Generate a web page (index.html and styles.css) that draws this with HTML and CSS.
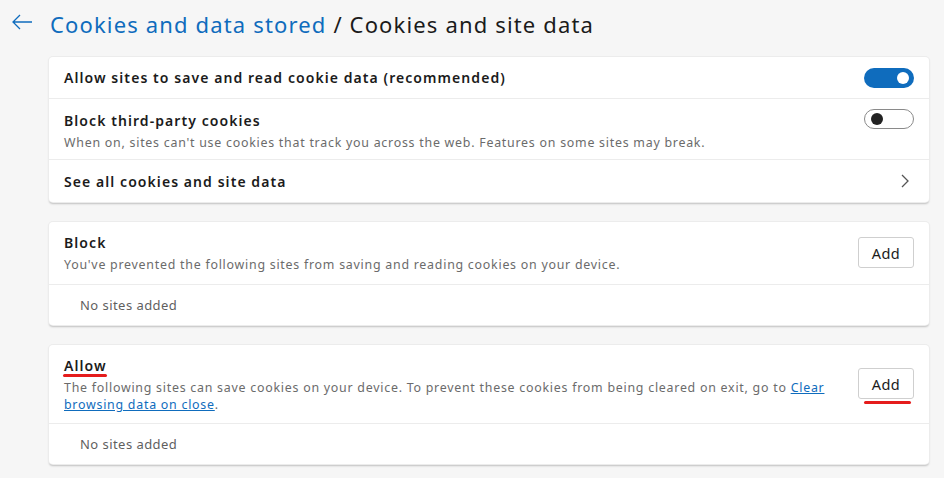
FILE: index.html
```html
<!DOCTYPE html>
<html>
<head>
<meta charset="utf-8">
<link rel="stylesheet" href="styles.css">
</head>
<body>
<div class="page">
  <header class="header">
    <svg class="back" width="22" height="16" viewBox="0 0 22 16"><path d="M21 8H2M9 1L2 8l7 7" fill="none" stroke="#0f6cbd" stroke-width="1.3"/></svg>
    <h1 class="title"><span class="crumb">Cookies and data stored</span> / Cookies and site data</h1>
  </header>

  <section class="card">
    <div class="row row-a">
      <div class="label">Allow sites to save and read cookie data (recommended)</div>
      <span class="toggle on"><span class="knob"></span></span>
    </div>
    <div class="row row-b">
      <div class="text">
        <div class="label">Block third-party cookies</div>
        <div class="desc">When on, sites can't use cookies that track you across the web. Features on some sites may break.</div>
      </div>
      <span class="toggle off"><span class="knob"></span></span>
    </div>
    <div class="row row-c">
      <div class="label">See all cookies and site data</div>
      <svg class="chev" width="10" height="16" viewBox="0 0 10 16"><path d="M2 2l6 6-6 6" fill="none" stroke="#555" stroke-width="1.3"/></svg>
    </div>
  </section>

  <section class="card">
    <div class="row sect-head">
      <div class="text">
        <div class="label">Block</div>
        <div class="desc">You've prevented the following sites from saving and reading cookies on your device.</div>
      </div>
      <button class="add">Add</button>
    </div>
    <div class="row empty">No sites added</div>
  </section>

  <section class="card">
    <div class="row sect-head allow-head">
      <div class="text">
        <div class="label"><span class="mark">Allow</span></div>
        <div class="desc">The following sites can save cookies on your device. To prevent these cookies from being cleared on exit, go to <a class="link" href="#">Clear browsing data on close</a>.</div>
      </div>
      <button class="add marked">Add</button>
    </div>
    <div class="row empty">No sites added</div>
  </section>
</div>
</body>
</html>
```
FILE: styles.css
```css
html, body {
  margin: 0;
  padding: 0;
}
body {
  background: #f6f6f6;
  font-family: "Noto Sans", "Open Sans", sans-serif;
  color: #1b1b1b;
  width: 944px;
  height: 478px;
  overflow: hidden;
}
.page {
  padding: 0 15px 0 49px;
}
.header {
  display: flex;
  align-items: center;
  height: 50px;
  margin-left: -38px;
  margin-bottom: 7px;
}
.back {
  margin-right: 17px;
  margin-top: -6px;
}
.title {
  margin: 0;
  margin-top: -2px;
  font-size: 22px;
  font-weight: 400;
  color: #1b1b1b;
  letter-spacing: 1.15px;
}
.crumb {
  color: #0f6cbd;
}
.card {
  background: #fff;
  border-radius: 4px;
  box-shadow: 0 0 0 1px #ececec, 0 1.5px 2px rgba(0,0,0,0.22);
  margin-bottom: 20px;
}
.row {
  display: flex;
  align-items: center;
  justify-content: space-between;
  padding: 0 15px;
  border-bottom: 1px solid #ececec;
}
.row:last-child {
  border-bottom: none;
}
.row-a { height: 41px; }
.row-b { height: 61px; align-items: flex-start; padding-top: 12px; box-sizing: border-box; }
.row-c { height: 42px; }
.label {
  font-size: 14px;
  font-weight: 600;
  color: #1b1b1b;
  letter-spacing: 1.07px;
  line-height: 19px;
}
.desc {
  font-size: 12.4px;
  color: #6b6b6b;
  margin-top: 4px;
  line-height: 17px;
  letter-spacing: 0.75px;
}
.toggle {
  width: 50px;
  height: 20px;
  border-radius: 10px;
  box-sizing: border-box;
  position: relative;
  flex: none;
}
.row-b .toggle {
  margin-top: -2px;
}
.toggle.on {
  background: #0f6cbd;
}
.toggle.off {
  border: 1px solid #8a8a8a;
  background: #fff;
}
.knob {
  position: absolute;
  width: 12px;
  height: 12px;
  border-radius: 50%;
  top: 4px;
}
.on .knob { background: #fff; right: 5px; }
.off .knob { background: #222; left: 6px; top: 3px; }
.chev {
  margin-right: 4px;
}
.sect-head {
  height: 63px;
  align-items: flex-start;
  padding-top: 11px;
  box-sizing: border-box;
}
.allow-head {
  height: 79px;
}
.allow-head .text {
  max-width: 775px;
}
.add {
  flex: none;
  width: 56px;
  height: 31px;
  margin-top: 4px;
  background: #fff;
  border: 1px solid #cfcfcf;
  border-radius: 3px;
  font-family: "Noto Sans", "Open Sans", sans-serif;
  font-size: 14.5px;
  letter-spacing: 0.5px;
  color: #1b1b1b;
  padding: 0;
  position: relative;
}
.allow-head .add {
  margin-top: 12px;
}
.empty {
  height: 41px;
  padding-left: 31px;
  font-size: 13px;
  letter-spacing: 0.45px;
  color: #5f5f5f;
}
.sect-head + .empty {
  height: 40px;
}
.link {
  color: #0f6cbd;
  text-decoration: underline;
}
.mark {
  position: relative;
}
.mark::after, .marked::after {
  content: "";
  position: absolute;
  height: 3px;
  background: #e51c1c;
  border-radius: 2px;
}
.mark::after {
  left: -1px;
  right: 0;
  bottom: -2px;
}
.marked::after {
  left: 5px;
  right: 2px;
  bottom: -6px;
}
```
